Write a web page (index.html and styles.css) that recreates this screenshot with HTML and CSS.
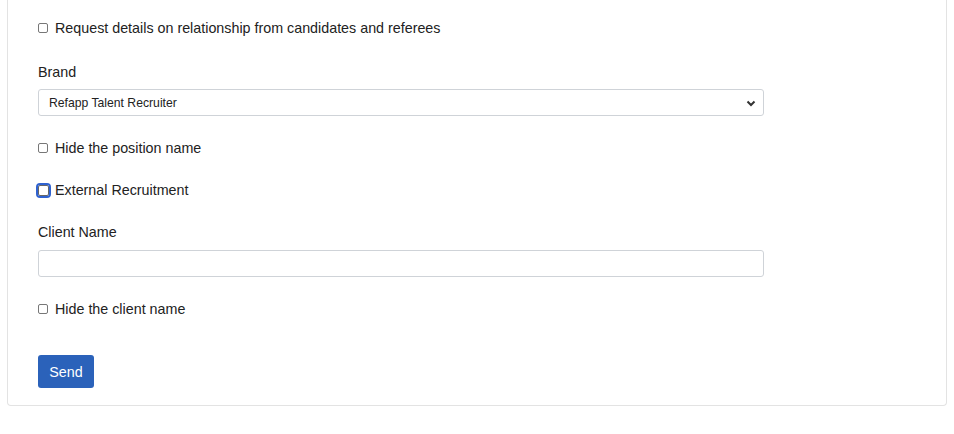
FILE: index.html
```html
<!DOCTYPE html>
<html>
<head>
<meta charset="utf-8">
<link rel="stylesheet" href="styles.css">
</head>
<body>
<div class="card">
  <form class="form">
    <label class="check row-first"><input type="checkbox" class="cb"><span>Request details on relationship from candidates and referees</span></label>
    <div class="field field-first">
      <div class="label">Brand</div>
      <div class="select">
        <span>Refapp Talent Recruiter</span>
        <svg class="chev" width="10" height="7" viewBox="0 0 10 7"><path d="M1.5 1.5 L5 5 L8.5 1.5" fill="none" stroke="#333" stroke-width="2"/></svg>
      </div>
    </div>
    <label class="check"><input type="checkbox" class="cb"><span>Hide the position name</span></label>
    <label class="check"><input type="checkbox" class="cb focus"><span>External Recruitment</span></label>
    <div class="field">
      <div class="label">Client Name</div>
      <div class="input"></div>
    </div>
    <label class="check"><input type="checkbox" class="cb"><span>Hide the client name</span></label>
    <div class="actions"><button type="button" class="btn">Send</button></div>
  </form>
</div>
</body>
</html>
```
FILE: styles.css
```css
html, body { margin: 0; padding: 0; background: #fff; }
body { font-family: "Liberation Sans", Arial, sans-serif; color: #222; font-size: 14.3px; }
.card {
  margin: 0 7px 0 7px;
  width: 940px;
  border: 1px solid #e3e3e3;
  border-top: 0;
  border-radius: 0 0 4px 4px;
  padding: 18px 30px 17px 30px;
  box-sizing: border-box;
  height: 406px;
}
.form { display: flex; flex-direction: column; width: 726px; }
.check { display: flex; align-items: center; height: 20px; line-height: 20px; margin-top: 22px; }
.row-first { margin-top: 0; }
.cb {
  appearance: none; -webkit-appearance: none;
  width: 10px; height: 10px; margin: 0 7px 0 0;
  border: 1px solid #777; border-radius: 2px; background: #fff;
  box-sizing: border-box; flex: none;
}
.cb.focus { outline: 2px solid #2f62d0; outline-offset: 0; border-color: #666; width: 11px; height: 11px; margin-right: 6px; border-radius: 2px; }
.field { display: flex; flex-direction: column; margin-top: 22px; }
.field-first { margin-top: 24px; }
.label { height: 20px; line-height: 20px; margin-bottom: 7px; }
.select, .input {
  height: 27px; box-sizing: border-box;
  border: 1px solid #cfd3d8; border-radius: 3px;
  display: flex; align-items: center; justify-content: space-between;
  padding: 0 7px 0 10px; font-size: 12.2px; color: #222;
}
.chev { margin-top: 1px; }
.input { margin-top: 1px; }
.actions { margin-top: 36px; }
.btn {
  background: #2b62ba; color: #fff; border: 0; border-radius: 3px;
  font-family: inherit; font-size: 14.3px; height: 33px; width: 56px; padding: 0;
}
```
